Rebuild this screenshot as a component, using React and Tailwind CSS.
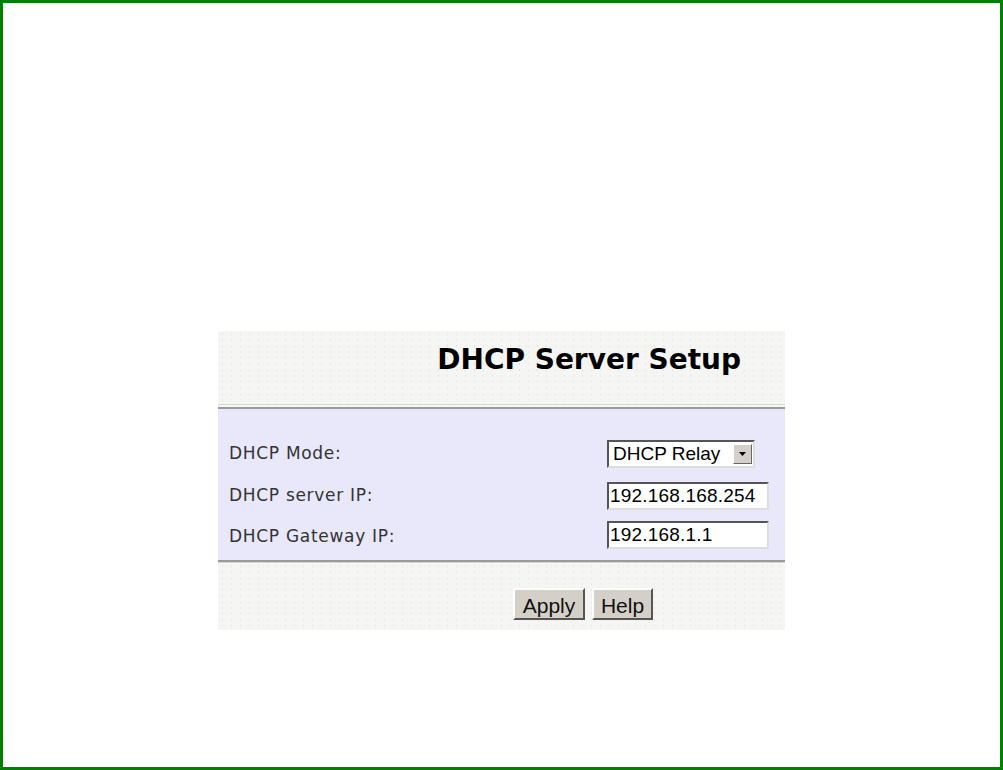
import React from "react";

const tex =
  "bg-[#f5f5f3] bg-[radial-gradient(#e6e6e3_1px,transparent_1px)] bg-[length:9px_6px]";

function Field({ label, children, mt, labelPad = "" }) {
  return (
    <div className={`flex items-center justify-between ${mt}`}>
      <span
        className={`pl-[11px] text-[17px] tracking-[0.7px] text-[#333] ${labelPad}`}
        style={{ fontFamily: "'DejaVu Sans', Verdana, sans-serif" }}
      >
        {label}
      </span>
      {children}
    </div>
  );
}

function TextBox({ value }) {
  return (
    <div className="mr-[16px] flex h-[28px] w-[162px] items-center border-2 border-t-[#555] border-l-[#555] border-r-[#ddd] border-b-[#ddd] bg-white pl-[1px] text-[19px] tracking-[0.2px] text-black">
      {value}
    </div>
  );
}

export default function App() {
  return (
    <div
      className="h-[770px] w-[1003px] border-[3px] border-[#008000] bg-white pl-[215px] pt-[328px]"
      style={{ fontFamily: "'Liberation Sans', Arial, sans-serif" }}
    >
      <div className="w-[567px]">
        {/* Header */}
        <div className={`flex h-[73px] items-start justify-end pr-[44px] pt-[8px] ${tex}`}>
          <h1
            className="text-[28px] font-bold text-black"
            style={{ fontFamily: "'DejaVu Sans', Verdana, sans-serif" }}
          >
            DHCP Server Setup
          </h1>
        </div>
        <div className="h-[1px] bg-[#ddd8c4]" />
        <div className={`h-[2px] ${tex}`} />
        <div className="h-[2px] bg-[#9a9a9a]" />

        {/* Form */}
        <div className="h-[151px] bg-[#e8e8fa] pt-[31px]">
          <Field label="DHCP Mode:" mt="">
            <div className="mr-[30px] flex h-[28px] w-[148px] items-center justify-between border-2 border-t-[#555] border-l-[#555] border-r-[#ddd] border-b-[#ddd] bg-white pl-[4px] pr-[1px] text-[19px] text-black">
              <span>DHCP Relay</span>
              <div className="flex h-[20px] w-[19px] items-center justify-center border border-t-white border-l-white border-r-[#666] border-b-[#666] bg-[#d4d0c8]">
                <svg width="8" height="5" viewBox="0 0 8 5">
                  <path d="M0 0h7L3.5 4z" fill="#000" />
                </svg>
              </div>
            </div>
          </Field>
          <Field label="DHCP server IP:" mt="mt-[14px]">
            <TextBox value="192.168.168.254" />
          </Field>
          <Field label="DHCP Gateway IP:" mt="mt-[10px]" labelPad="pt-[4px]">
            <TextBox value="192.168.1.1" />
          </Field>
        </div>

        <div className="h-[2px] bg-[#9a9a9a]" />
        <div className="h-[1px] bg-[#d8d8d8]" />

        {/* Buttons */}
        <div className={`flex h-[67px] items-start gap-[7px] pl-[295px] pt-[25px] ${tex}`}>
          <button className="h-[32px] w-[72px] border-2 border-t-white border-l-white border-r-[#555] border-b-[#555] bg-[#d4d0c8] text-[21px] text-[#111]">
            Apply
          </button>
          <button className="h-[32px] w-[61px] border-2 border-t-white border-l-white border-r-[#555] border-b-[#555] bg-[#d4d0c8] text-[21px] text-[#111]">
            Help
          </button>
        </div>
      </div>
    </div>
  );
}
